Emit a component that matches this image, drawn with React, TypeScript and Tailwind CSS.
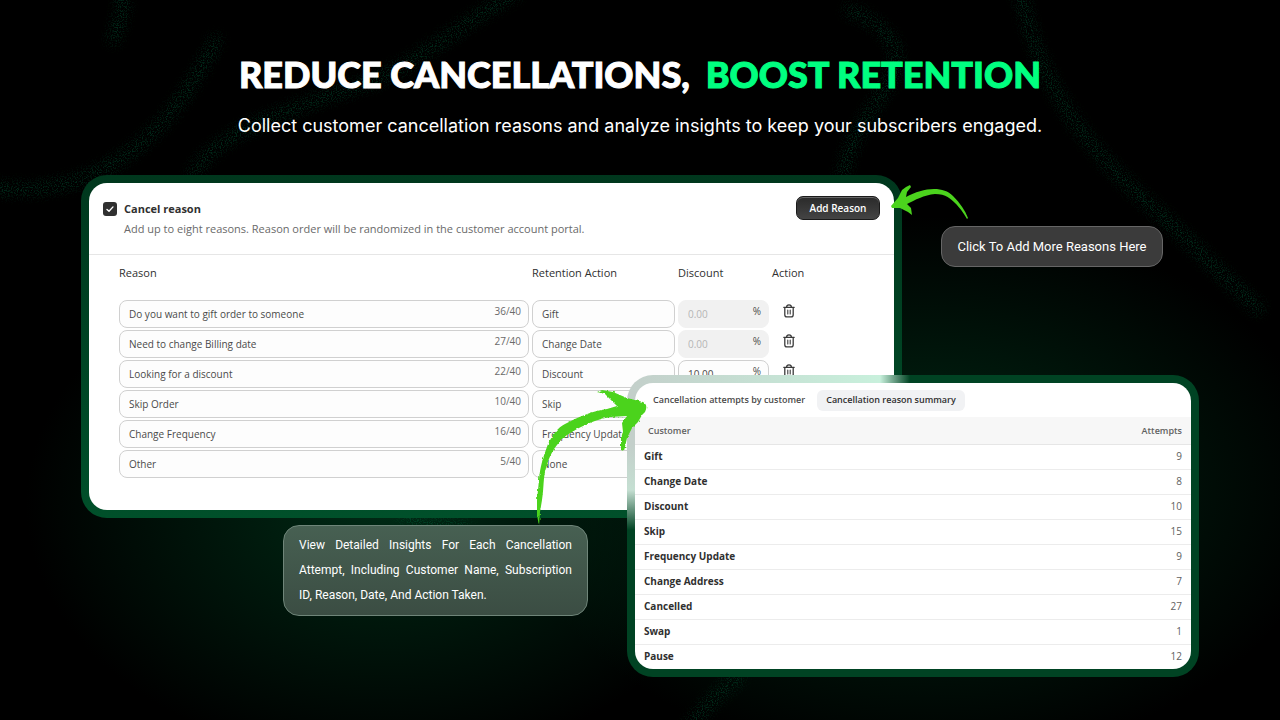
import { useState } from "react";

interface ReasonRow {
  reason: string;
  count: number;
  action: string;
  discount?: string;
}

const REASONS: ReasonRow[] = [
  { reason: "Do you want to gift order to someone", count: 36, action: "Gift" },
  { reason: "Need to change Billing date", count: 27, action: "Change Date" },
  { reason: "Looking for a discount", count: 22, action: "Discount", discount: "10.00" },
  { reason: "Skip Order", count: 10, action: "Skip" },
  { reason: "Change Frequency", count: 16, action: "Frequency Update" },
  { reason: "Other", count: 5, action: "None" },
];

const ACTIONS = ["Gift", "Change Date", "Discount", "Skip", "Frequency Update", "None"];

const SUMMARY = [
  { name: "Gift", attempts: 9 },
  { name: "Change Date", attempts: 8 },
  { name: "Discount", attempts: 10 },
  { name: "Skip", attempts: 15 },
  { name: "Frequency Update", attempts: 9 },
  { name: "Change Address", attempts: 7 },
  { name: "Cancelled", attempts: 27 },
  { name: "Swap", attempts: 1 },
  { name: "Pause", attempts: 12 },
];

const COLUMNS = "grid grid-cols-[410px_143px_91px_44px] gap-x-[3px]";

function TrashIcon() {
  return (
    <svg className="h-[14px] w-[14px]" viewBox="0 0 14 14" fill="none" stroke="#3a3a3a" strokeWidth={1.3} strokeLinecap="round" strokeLinejoin="round">
      <path d="M1.8 3.3h10.4M4.6 3.1C4.6 1.7 5.5.8 7 .8s2.4.9 2.4 2.3M2.8 3.5v7.2c0 1.4.8 2.2 2.2 2.2h4c1.4 0 2.2-.8 2.2-2.2V3.5" />
      <path d="M5.8 6v4M8.2 6v4" strokeWidth={1.1} />
    </svg>
  );
}

/* Grainy light trails behind the content */
function Trails() {
  return (
    <svg className="absolute inset-0 h-full w-full" viewBox="0 0 1280 720" preserveAspectRatio="none" fill="none" aria-hidden="true">
      <defs>
        <filter id="grain" x="0" y="0" width="1280" height="720" filterUnits="userSpaceOnUse">
          <feGaussianBlur in="SourceGraphic" stdDeviation="6" result="soft" />
          <feTurbulence type="fractalNoise" baseFrequency="0.8" numOctaves="2" seed="4" />
          <feColorMatrix values="0 0 0 0 1  0 0 0 0 1  0 0 0 0 1  5 0 0 0 -2.4" result="dots" />
          <feComposite in="soft" in2="dots" operator="in" />
        </filter>
      </defs>
      <g filter="url(#grain)" stroke="#067043" strokeOpacity="0.5" strokeWidth="11">
        <path d="M122 -10C126 8 118 26 112 44" />
        <path d="M218 36C188 96 148 158 72 182C40 191 18 190 -10 188" />
        <path d="M520 -10C460 24 420 62 370 82C296 108 214 130 192 176" />
        <path d="M845 8C884 24 906 46 892 76C872 112 850 134 842 178" />
        <path d="M1020 -10C1036 70 1070 130 1140 196C1190 240 1222 276 1262 312" />
        <path d="M400 514C430 528 452 526 470 530" />
        <path d="M742 674C718 694 704 706 688 730" />
      </g>
    </svg>
  );
}

function ReasonCard() {
  const [enabled, setEnabled] = useState(true);

  return (
    <section className="relative min-w-0 flex-1 rounded-[26px] bg-gradient-to-b from-[#00371d] to-[#00502a] p-2">
      <div className="h-[327px] overflow-hidden rounded-[18px] bg-white text-[#303030]">
        <header className="flex h-[72px] items-start justify-between border-b border-[#e6e6e6] px-[14px] pt-[13px]">
          <div className="pt-[5px]">
            <label className="flex items-center gap-[7px] text-[11px] leading-4 font-bold">
              <span className="relative flex h-[14px] w-[14px]">
                <input
                  type="checkbox"
                  checked={enabled}
                  onChange={(e) => setEnabled(e.target.checked)}
                  className="h-[14px] w-[14px] appearance-none rounded-[3px] bg-[#303030]"
                />
                {enabled && (
                  <svg className="pointer-events-none absolute inset-0" viewBox="0 0 14 14" fill="none" stroke="white" strokeWidth={1.4} strokeLinecap="round" strokeLinejoin="round">
                    <path d="M4 7.4L6 9.3L10 4.9" />
                  </svg>
                )}
              </span>
              Cancel reason
            </label>
            <p className="mt-1 pl-[21px] text-[11px] leading-4 text-[#6a6a6a]">
              Add up to eight reasons. Reason order will be randomized in the customer account portal.
            </p>
          </div>
          <button className="h-6 w-[84px] rounded-[7px] border border-[#1a1a1a] bg-gradient-to-b from-[#2a2a2a] to-[#444] text-[10px] font-semibold text-white shadow-[inset_0_1px_0_#666]">
            Add Reason
          </button>
        </header>

        <div className="px-[30px] pt-2">
          <div className={`${COLUMNS} mb-[17px] text-[11px] leading-5`}>
            <span>Reason</span>
            <span>Retention Action</span>
            <span>Discount</span>
            <span>Action</span>
          </div>
          <div className="flex flex-col gap-[2px]">
            {REASONS.map((row) => (
              <div key={row.reason} className={`${COLUMNS} h-7 text-[10px] text-[#4a4a4a]`}>
                <div className="relative">
                  <input
                    aria-label="Reason"
                    defaultValue={row.reason}
                    className="block h-7 w-full rounded-lg border border-[#d0d0d0] bg-[#fdfdfd] pr-12 pl-[9px]"
                  />
                  <span className="absolute top-[3px] right-2 leading-4 text-[#6a6a6a]">{row.count}/40</span>
                </div>
                <select
                  aria-label="Retention action"
                  defaultValue={row.action}
                  className="block h-7 w-full appearance-none rounded-lg border border-[#d0d0d0] bg-[#fdfdfd] px-[9px]"
                >
                  {ACTIONS.map((a) => (
                    <option key={a}>{a}</option>
                  ))}
                </select>
                <div className="relative">
                  <input
                    aria-label="Discount"
                    placeholder="0.00"
                    defaultValue={row.discount}
                    disabled={!row.discount}
                    className="block h-7 w-full rounded-lg border border-[#d0d0d0] bg-[#fdfdfd] px-[9px] placeholder:text-[#b5b5b5] disabled:border-[#f1f1f1] disabled:bg-[#f1f1f1]"
                  />
                  <span className="absolute top-[3px] right-2 leading-4">%</span>
                </div>
                <button aria-label="Delete reason" className="flex items-start pt-1 pl-[10px]">
                  <TrashIcon />
                </button>
              </div>
            ))}
          </div>
        </div>
      </div>

      <svg className="absolute top-2 left-full -ml-3 h-[38px] w-[80px]" viewBox="890 183 80 38" fill="#4bd31d" aria-hidden="true">
        <path d="M891 206L898 198L902 190L906 187L910 185L911 187L907 192L906 197C915 192 925 189 934 189C942 189 948 191 953 196C960 203 965 210 968 218L967 219C963 212 960 208 955 203C951 199 946 194 935 194C924 195 915 200 907 204L911 208L912 215L908 212L900 208L892 208Z" />
      </svg>
    </section>
  );
}

function SummaryCard() {
  return (
    <section className="absolute top-[200px] right-[81px] w-[572px] rounded-[26px] bg-[#004323] bg-[linear-gradient(to_right,#c3cfca,#c8f0dc_253px,transparent_283px),linear-gradient(to_bottom,#c3cfca_70px,#c5dfd2_115px,transparent_155px)] bg-[size:100%_16px,16px_100%] bg-no-repeat p-2">
      <div className="h-[286px] overflow-hidden rounded-[18px] bg-white text-[#303030]">
        <div className="flex h-[34px] items-center gap-[3px] pl-[9px] text-[9px] font-semibold">
          <button className="h-[21px] rounded-md px-[9px] text-[#4a4a4a]">Cancellation attempts by customer</button>
          <button className="h-[21px] rounded-md bg-[#f1f2f4] px-[9px]">Cancellation reason summary</button>
        </div>
        <table className="w-full border-collapse text-[10px]">
          <thead>
            <tr className="h-[27px] border-b border-[#e6e6e6] bg-[#f7f7f7] text-[9px] text-[#616161]">
              <th className="pl-[13px] text-left font-semibold">Customer</th>
              <th className="pr-[9px] text-right font-semibold">Attempts</th>
            </tr>
          </thead>
          <tbody>
            {SUMMARY.map((row) => (
              <tr key={row.name} className="h-[25px] border-b border-[#ececec]">
                <td className="pl-[9px] font-bold">{row.name}</td>
                <td className="pr-[9px] text-right text-[#616161]">{row.attempts}</td>
              </tr>
            ))}
          </tbody>
        </table>
      </div>

      <svg className="absolute top-[13px] -left-[93px] h-[140px] w-[114px]" viewBox="534 388 114 140" fill="#4bd31d" aria-hidden="true">
        <defs>
          <filter id="brush">
            <feTurbulence type="fractalNoise" baseFrequency="0.3" numOctaves="1" seed="2" />
            <feDisplacementMap in="SourceGraphic" scale="3" xChannelSelector="R" yChannelSelector="G" />
          </filter>
        </defs>
        <path
          filter="url(#brush)"
          d="M539 526L537 515L537 500L539 480C540 466 543 458 548 444C552 436 558 427 565 424C578 417 592 411 607 409L617 406L610 399L605 394L597 392L602 390L613 392L627 398L643 402C647 404 647 408 645 412L642 415L638 422L632 428L627 438L624 451L621 450L621 438L623 432L622 423L627 416L610 417C592 420 572 431 563 438C555 446 549 456 546 468C543 478 544 488 542 500L540 512Z"
        />
      </svg>
    </section>
  );
}

export default function App() {
  return (
    <main className="relative min-h-screen overflow-hidden bg-black bg-[radial-gradient(ellipse_28%_36%_at_30%_70%,#002a15,transparent),radial-gradient(ellipse_32%_38%_at_72%_68%,#002a15,transparent)] font-['Open_Sans',sans-serif]">
      <Trails />
      <div className="relative mx-auto max-w-7xl">
        <header className="pt-[50px] text-center text-white">
          <h1 className="flex justify-center gap-4 font-['Lato',sans-serif] text-[36px] leading-[48px] font-black [-webkit-text-stroke:1px]">
            <span>REDUCE CANCELLATIONS,</span>
            <span className="text-[#00ff80]">BOOST RETENTION</span>
          </h1>
          <p className="mt-3 font-['Inter',sans-serif] text-[18px] leading-8">
            Collect customer cancellation reasons and analyze insights to keep your subscribers engaged.
          </p>
        </header>
        <div className="relative mt-[33px] px-[81px]">
          <div className="flex items-start gap-[39px]">
            <ReasonCard />
            <div className="w-[258px] pt-[51px]">
              <p className="w-[222px] rounded-[14px] border border-[#666] bg-[#3b3b3b] text-center font-['Roboto',sans-serif] text-[13px] leading-[39px] text-white">
                Click To Add More Reasons Here
              </p>
            </div>
          </div>
          <p className="mt-[7px] ml-[202px] w-[305px] rounded-[16px] border border-[#6f8579] bg-gradient-to-b from-[#476052] to-[#3b4d43] px-[15px] py-[7px] text-justify font-['Roboto',sans-serif] text-[12px] leading-[25px] text-white">
            View Detailed Insights For Each Cancellation Attempt, Including Customer Name, Subscription ID, Reason, Date, And Action Taken.
          </p>
          <SummaryCard />
        </div>
      </div>
    </main>
  );
}
